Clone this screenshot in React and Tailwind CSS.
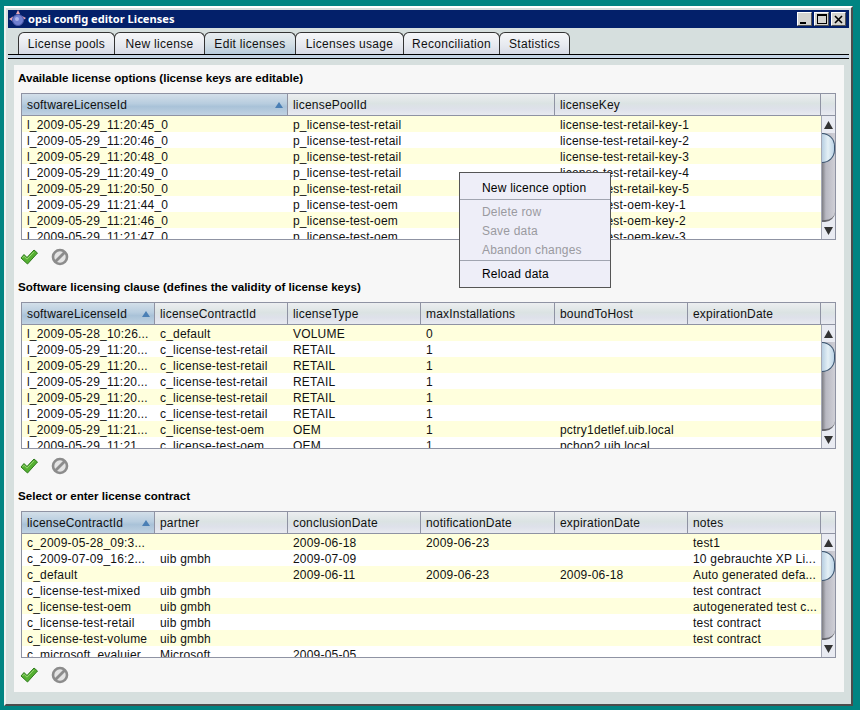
import React from 'react';

const cols3 = 'grid-cols-[266px_267px_266px]';
const cols6 = 'grid-cols-[133px_133px_133px_134px_133px_133px]';

const optionRows = [
    ['l_2009-05-29_11:20:45_0', 'p_license-test-retail', 'license-test-retail-key-1'],
    ['l_2009-05-29_11:20:46_0', 'p_license-test-retail', 'license-test-retail-key-2'],
    ['l_2009-05-29_11:20:48_0', 'p_license-test-retail', 'license-test-retail-key-3'],
    ['l_2009-05-29_11:20:49_0', 'p_license-test-retail', 'license-test-retail-key-4'],
    ['l_2009-05-29_11:20:50_0', 'p_license-test-retail', 'license-test-retail-key-5'],
    ['l_2009-05-29_11:21:44_0', 'p_license-test-oem', 'license-test-oem-key-1'],
    ['l_2009-05-29_11:21:46_0', 'p_license-test-oem', 'license-test-oem-key-2'],
    ['l_2009-05-29_11:21:47_0', 'p_license-test-oem', 'license-test-oem-key-3'],
];

const clauseRows = [
    ['l_2009-05-28_10:26...', 'c_default', 'VOLUME', '0', '', ''],
    ['l_2009-05-29_11:20...', 'c_license-test-retail', 'RETAIL', '1', '', ''],
    ['l_2009-05-29_11:20...', 'c_license-test-retail', 'RETAIL', '1', '', ''],
    ['l_2009-05-29_11:20...', 'c_license-test-retail', 'RETAIL', '1', '', ''],
    ['l_2009-05-29_11:20...', 'c_license-test-retail', 'RETAIL', '1', '', ''],
    ['l_2009-05-29_11:20...', 'c_license-test-retail', 'RETAIL', '1', '', ''],
    ['l_2009-05-29_11:21...', 'c_license-test-oem', 'OEM', '1', 'pctry1detlef.uib.local', ''],
    ['l_2009-05-29_11:21...', 'c_license-test-oem', 'OEM', '1', 'pchop2.uib.local', ''],
];

const contractRows = [
    ['c_2009-05-28_09:3...', '', '2009-06-18', '2009-06-23', '', 'test1'],
    ['c_2009-07-09_16:2...', 'uib gmbh', '2009-07-09', '', '', '10 gebrauchte XP Li...'],
    ['c_default', '', '2009-06-11', '2009-06-23', '2009-06-18', 'Auto generated defa...'],
    ['c_license-test-mixed', 'uib gmbh', '', '', '', 'test contract'],
    ['c_license-test-oem', 'uib gmbh', '', '', '', 'autogenerated test c...'],
    ['c_license-test-retail', 'uib gmbh', '', '', '', 'test contract'],
    ['c_license-test-volume', 'uib gmbh', '', '', '', 'test contract'],
    ['c_microsoft_evaluier...', 'Microsoft', '2009-05-05', '', '', ''],
];

const tabs = [
    { label: 'License pools', width: 'w-[97px]' },
    { label: 'New license', width: 'w-[91px]' },
    { label: 'Edit licenses', width: 'w-[92px]', active: true },
    { label: 'Licenses usage', width: 'w-[109px]' },
    { label: 'Reconciliation', width: 'w-[97px]' },
    { label: 'Statistics', width: 'w-[71px]' },
];

const SortArrow = () => (
    <svg width="8" height="6" viewBox="0 0 8 6" className="absolute right-[4px] top-[8px]">
        <path d="M4 0 L8 6 L0 6 Z" fill="#4a7fb5" />
    </svg>
);

const HeaderCell = ({ label, sorted }) => (
    <div
        className={`relative flex h-[21px] items-center border-r border-[#8f93a3] pt-px pl-[5px] ${
            sorted
                ? 'bg-[linear-gradient(#d3dfe9,#b8cddf_45%,#a9c2d8_60%,#c0d2e2)]'
                : 'bg-[linear-gradient(#eceef0,#dbe3e3_45%,#dee1ea_70%,#e8eaf0)]'
        }`}
    >
        {label}
        {sorted && <SortArrow />}
    </div>
);

const ScrollBar = () => (
    <div className="flex h-[123px] w-[14px] flex-col border-l border-[#a5a8b5] bg-[#e9ebf2]">
        <div className="flex h-[17px] items-center justify-center">
            <svg width="9" height="8" viewBox="0 0 9 8"><path d="M4.5 0 L9 8 L0 8 Z" fill="#333" /></svg>
        </div>
        <div className="h-[89px] overflow-hidden rounded-br-[10px] border-b-2 border-[#66666c] bg-[linear-gradient(90deg,#7e7e84,#b8b8c2_30%,#cfcfd6)]">
            <div className="h-[30px] rounded-r-[15px] border border-l-0 border-[#3b5570] bg-[linear-gradient(90deg,#b8cfe2,#e4f0f6_50%,#bcd3e6)]" />
        </div>
        <div className="flex flex-1 items-center justify-center">
            <svg width="9" height="8" viewBox="0 0 9 8"><path d="M0 0 L9 0 L4.5 8 Z" fill="#333" /></svg>
        </div>
    </div>
);

const DataTable = ({ headers, rows, cols }) => (
    <div className="h-[147px] w-[815px] border border-[#8f93a3] text-[12px] leading-[16px] tracking-[0.2px] text-[#111]">
        <div className="flex border-b border-[#8f93a3]">
            <div className={`grid ${cols} w-[799px]`}>
                {headers.map((h, i) => (
                    <HeaderCell key={h} label={h} sorted={i === 0} />
                ))}
            </div>
            <div className="h-[21px] flex-1 bg-[linear-gradient(#eceef0,#dbe3e3_45%,#dee1ea_70%,#e8eaf0)]" />
        </div>
        <div className="flex">
            <div className="h-[123px] w-[799px] overflow-hidden">
                {rows.map((row, r) => (
                    <div key={r} className={`grid ${cols} h-[16px] ${r % 2 === 0 ? 'bg-[#ffffdd]' : 'bg-white'}`}>
                        {row.map((cell, c) => (
                            <div key={c} className="overflow-hidden pt-px pl-[5px] whitespace-nowrap">
                                {cell}
                            </div>
                        ))}
                    </div>
                ))}
            </div>
            <ScrollBar />
        </div>
    </div>
);

const SaveIcon = () => (
    <svg width="18" height="16" viewBox="0 0 18 16">
        <path d="M1 9 L4 5.5 L7 8.5 L14 1 L17.5 4 L7.5 15 Z" fill="#55b032" stroke="#2f7a1c" strokeWidth="1" strokeLinejoin="round" />
        <path d="M2.5 9 L4 7.2 L7 10.2 L14 2.8" fill="none" stroke="#9ad873" strokeWidth="1" />
    </svg>
);

const CancelIcon = () => (
    <svg width="18" height="18" viewBox="0 0 18 18">
        <circle cx="9" cy="9" r="7" fill="#e4e4e4" stroke="#8c8c8c" strokeWidth="2.6" />
        <path d="M4.5 13.5 L13.5 4.5" stroke="#8c8c8c" strokeWidth="2.8" />
    </svg>
);

const Section = ({ title, headers, rows, cols, last }) => (
    <div className={last ? '' : 'h-[209px]'}>
        <div className="mb-[7px] -ml-[3px] h-[16px] text-[11.6px] leading-[16px] font-bold text-black">{title}</div>
        <DataTable headers={headers} rows={rows} cols={cols} />
        <div className="-ml-px flex items-center gap-[13px] pt-[8px]">
            <SaveIcon />
            <CancelIcon />
        </div>
    </div>
);

const WinButton = ({ children }) => (
    <div className="flex h-[14px] w-[15px] items-center justify-center border border-t-white border-r-[#555] border-b-[#555] border-l-white bg-[#d4d4d0]">
        {children}
    </div>
);

const Logo = () => (
    <svg width="18" height="18" viewBox="0 0 18 18" className="shrink-0">
        <path d="M9 0 L11 4 L7 4 Z" fill="#e9a6b4" />
        <path d="M0 9 L4 6.5 L4 11.5 Z" fill="#e9a6b4" />
        <path d="M17 8 L13 6 L13 11 Z" fill="#e9a6b4" />
        <circle cx="9" cy="10" r="5.5" fill="#6f7fd0" stroke="#4a58a8" />
        <circle cx="8" cy="9" r="2" fill="#aab4ea" />
    </svg>
);

const MenuItem = ({ children, disabled }) => (
    <div className={`flex h-[19px] items-center pl-[22px] ${disabled ? 'text-[#9a9aa0]' : 'text-black'}`}>{children}</div>
);

export default function App() {
    return (
        <div className="h-[710px] w-[860px] bg-[#008482] pt-[6px] pl-[4px] [font-family:'Liberation_Sans',Arial,sans-serif]">
            <div className="relative h-[700px] w-[849px] border-t-2 border-r-2 border-b-2 border-l-2 border-t-white border-r-[#4c4c4c] border-b-[#4c4c4c] border-l-[#eef2f0] bg-[#d6dfde] px-[2px] pt-[2px]">
                <div className="flex h-[18px] items-center bg-[#03206a] pl-[1px] text-white">
                    <Logo />
                    <span className="ml-[1px] text-[11.1px] font-bold [font-family:'Noto_Sans',sans-serif]">opsi config editor Licenses</span>
                    <div className="ml-auto flex gap-[2px] pr-[3px]">
                        <WinButton>
                            <span className="mt-[7px] mr-[3px] h-[2px] w-[6px] bg-black" />
                        </WinButton>
                        <WinButton>
                            <span className="h-[10px] w-[10px] border border-t-2 border-black" />
                        </WinButton>
                        <WinButton>
                            <svg width="9" height="9" viewBox="0 0 9 9"><path d="M1 1 L8 8 M8 1 L1 8" stroke="#000" strokeWidth="1.6" /></svg>
                        </WinButton>
                    </div>
                </div>

                <div className="mt-[4px] flex h-[22px] items-stretch pl-[10px] text-[12px] tracking-[0.3px] text-[#111]">
                    {tabs.map(tab => (
                        <div
                            key={tab.label}
                            className={`-mr-px flex items-center justify-center rounded-t-[6px] border border-b-0 border-[#333] ${tab.width} ${
                                tab.active
                                    ? 'bg-[linear-gradient(#e8edf0,#d5e0e6_50%,#b9ccdc)]'
                                    : 'bg-[linear-gradient(#f6f7f9,#e6e9ef_60%,#d8dbe6)]'
                            }`}
                        >
                            {tab.label}
                        </div>
                    ))}
                </div>
                <div className="h-[5px] border-t border-b border-black bg-[#c7d6e6]" />

                <div className="mx-[6px] mt-[6px] h-[627px] w-[830px] bg-[#f7f7f7] pt-[5px] pl-[7px]">
                    <Section
                        title="Available license options (license keys are editable)"
                        headers={['softwareLicenseId', 'licensePoolId', 'licenseKey']}
                        rows={optionRows}
                        cols={cols3}
                    />
                    <Section
                        title="Software licensing clause (defines the validity of license keys)"
                        headers={['softwareLicenseId', 'licenseContractId', 'licenseType', 'maxInstallations', 'boundToHost', 'expirationDate']}
                        rows={clauseRows}
                        cols={cols6}
                    />
                    <Section
                        last
                        title="Select or enter license contract"
                        headers={['licenseContractId', 'partner', 'conclusionDate', 'notificationDate', 'expirationDate', 'notes']}
                        rows={contractRows}
                        cols={cols6}
                    />
                </div>

                <div className="absolute top-[164px] left-[453px] h-[116px] w-[152px] border border-[#555] bg-[#eeeef8] pt-[5px] text-[12px] tracking-[0.2px]">
                    <MenuItem>New licence option</MenuItem>
                    <div className="mt-[2px] mb-[2px] h-px bg-[#a0a4b0]" />
                    <MenuItem disabled>Delete row</MenuItem>
                    <MenuItem disabled>Save data</MenuItem>
                    <MenuItem disabled>Abandon changes</MenuItem>
                    <div className="mt-px mb-[3px] h-px bg-[#a0a4b0]" />
                    <MenuItem>Reload data</MenuItem>
                </div>
            </div>
        </div>
    );
}
